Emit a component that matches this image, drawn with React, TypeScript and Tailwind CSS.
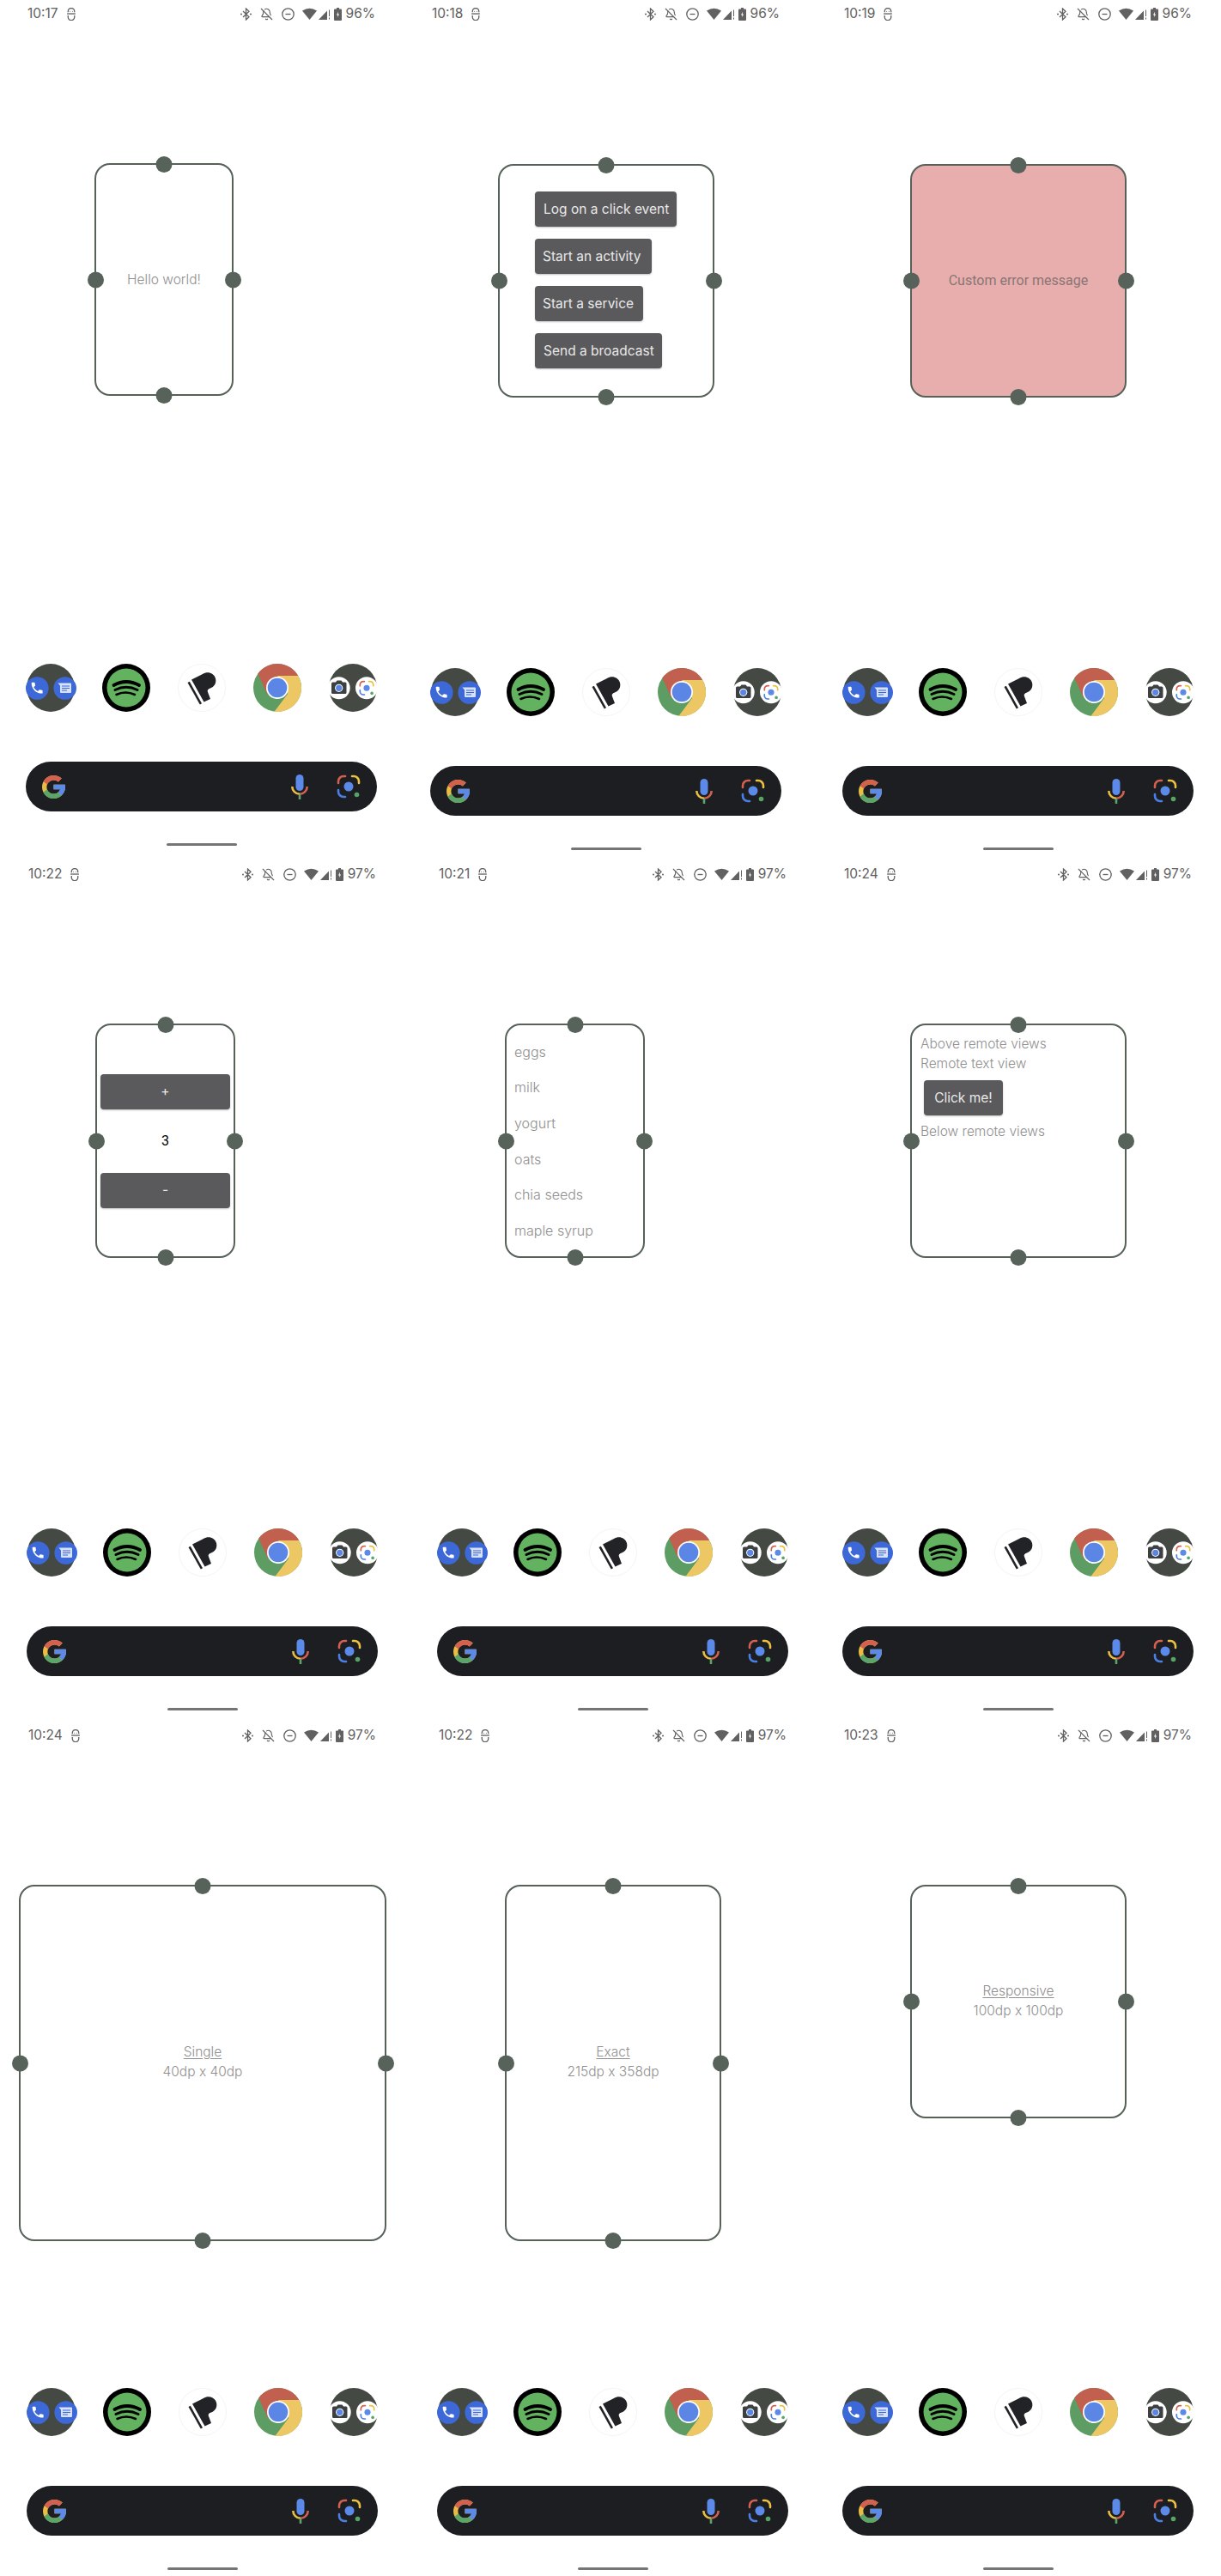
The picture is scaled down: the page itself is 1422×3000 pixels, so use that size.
import { BellOff } from 'lucide-react';
import type { ReactNode } from 'react';

function MiniIcon() {
    return (
        <svg viewBox="0 0 12 16" className="h-[15px] w-[12px]" fill="none" stroke="currentColor" strokeWidth="1.4">
            <path d="M2 5.500V4.500a4 4 0 0 1 8 0V5.500" />
            <path d="M.8 7.500h10.400" />
            <path d="M2 9.500v2a4 4 0 0 0 8 0v-2" />
            <circle cx="4.500" cy="4.500" r=".6" fill="currentColor" stroke="none" />
            <circle cx="7.500" cy="4.500" r=".6" fill="currentColor" stroke="none" />
        </svg>
    );
}

function StatusIcons() {
    return (
        <div className="flex items-center">
            <svg viewBox="0 0 13 15" className="h-[15px] w-[13px]" fill="none" stroke="currentColor" strokeWidth="1.3">
                <path d="M3 4l7 6.700-3.500 3.300V1L10 4.300 3 11" />
                <circle cx="1" cy="7.500" r="1" fill="currentColor" stroke="none" />
                <circle cx="12" cy="7.500" r="1" fill="currentColor" stroke="none" />
            </svg>
            <BellOff className="ml-[10px] h-[15px] w-[15px]" strokeWidth={1.8} />
            <svg viewBox="0 0 15 15" className="ml-[10px] h-[15px] w-[15px]" fill="none" stroke="currentColor" strokeWidth="1.3">
                <circle cx="7.500" cy="7.500" r="6.700" />
                <path d="M4.500 7.500h6" />
            </svg>
            <svg viewBox="0 0 17 14" className="ml-[9px] h-[14px] w-[17px]" fill="currentColor">
                <path d="M0 3.500Q8.500-2 17 3.500L8.500 14Z" />
            </svg>
            <svg viewBox="0 0 14 14" className="ml-[2px] h-[14px] w-[14px]" fill="currentColor">
                <path d="M0 14L10 3.500V14Z" />
                <path d="M12 2.500h1V10h-1zM12 11.500h1V13.500h-1z" />
            </svg>
            <svg viewBox="0 0 9 15" className="ml-[4px] h-[15px] w-[9px]" fill="currentColor">
                <path d="M3 0h3v1.500h2a1 1 0 0 1 1 1V14a1 1 0 0 1-1 1H1a1 1 0 0 1-1-1V2.500a1 1 0 0 1 1-1h2z" />
                <path d="M5 4.500L3 8.500h1.300V11L6 7.500H4.700z" fill="#fff" />
            </svg>
        </div>
    );
}

function StatusBar({ time, battery }: { time: string; battery: string }) {
    return (
        <div className="flex h-[32px] items-center justify-between pr-[33px] pl-[32px] text-[15.5px] font-normal text-[#616161]">
            <div className="flex items-center gap-[9px]">
                <span>{time}</span>
                <MiniIcon />
            </div>
            <div className="flex items-center gap-[5px]">
                <StatusIcons />
                <span>{battery}</span>
            </div>
        </div>
    );
}

function LensIcon({ x = 0, y = 0, size = 28 }: { x?: number; y?: number; size?: number }) {
    return (
        <svg x={x} y={y} width={size} height={size} viewBox="0 0 28 28" fill="none" strokeWidth="2.600" strokeLinecap="round">
            <path d="M2 10V8a6 6 0 0 1 6-6h2" stroke="#d4604f" />
            <path d="M18 2h2a6 6 0 0 1 6 6v2" stroke="#ecc040" />
            <path d="M2 18v2a6 6 0 0 0 6 6h2" stroke="#4a7fe5" />
            <circle cx="14" cy="14" r="5.500" fill="#5b8ae8" />
            <circle cx="23.500" cy="23.500" r="2.800" fill="#57a566" />
        </svg>
    );
}

function Dock() {
    return (
        <div className="flex gap-[32px] pl-[31px]">
            {/* phone + messages folder */}
            <svg viewBox="0 0 56 56" className="h-[56px] w-[56px] overflow-visible">
                <circle cx="28" cy="28" r="28" fill="#444943" />
                <circle cx="12.300" cy="28.500" r="13.300" fill="#3d69d8" />
                <circle cx="44.700" cy="28.500" r="13.300" fill="#3d69d8" />
                <path
                    transform="translate(3.500 19.500) scale(.72)"
                    fill="#fff"
                    d="M6.620 10.790c1.440 2.830 3.760 5.140 6.590 6.590l2.200-2.200c.27-.27.67-.36 1.020-.24 1.120.37 2.330.57 3.570.57.55 0 1 .45 1 1V20c0 .55-.45 1-1 1-9.390 0-17-7.610-17-17 0-.55.45-1 1-1h3.500c.55 0 1 .45 1 1 0 1.250.2 2.450.57 3.570.11.35.03.74-.25 1.020l-2.200 2.200z"
                />
                <path d="M36.500 22.500H51a1 1 0 0 1 1 1V33a1 1 0 0 1-1 1H40a1 1 0 0 1-1-1v-7.500z" fill="#d7e1f8" />
                <path d="M41 26h9M41 28.500h9M41 31h6" stroke="#3d69d8" strokeWidth="1.200" />
            </svg>
            {/* spotify */}
            <svg viewBox="0 0 56 56" className="h-[56px] w-[56px]" fill="none" stroke="#000" strokeLinecap="round">
                <circle cx="28" cy="28" r="28" fill="#000" stroke="none" />
                <circle cx="28" cy="28" r="22.500" fill="#62b25f" stroke="none" />
                <path d="M13.500 25Q28 17 43 25" strokeWidth="3.800" />
                <path d="M15 30.500Q28 24 41 30.500" strokeWidth="3" />
                <path d="M16.500 36Q27 31 38 36" strokeWidth="2.500" />
            </svg>
            {/* piano */}
            <svg viewBox="0 0 56 56" className="h-[56px] w-[56px]">
                <circle cx="28" cy="28" r="27.500" fill="#fff" stroke="#f4f4f4" />
                <path d="M16 18.500L29 12C34 8.500 42 10 44 17C45.500 23 42 27 38 28.500C35 29.500 34 31 35 33L38 41L30.500 44.500Z" fill="#222327" />
                <path d="M11.500 22L13.800 20.800L28 46.300L25.800 47.500Z" fill="#222327" />
            </svg>
            {/* chrome */}
            <svg viewBox="0 0 56 56" className="h-[56px] w-[56px]">
                <circle cx="28" cy="28" r="28" fill="#5d9c63" />
                <path d="M28 14L52.250 14A28 28 0 0 1 24.500 55.800L40.100 35Z" fill="#ecc764" />
                <path d="M28 14L52.250 14A28 28 0 0 0 5.300 11.600L15.900 35Z" fill="#c2604f" />
                <circle cx="28" cy="28" r="13" fill="#fff" />
                <circle cx="28" cy="28" r="11.300" fill="#5b86e5" />
            </svg>
            {/* camera + lens folder */}
            <svg viewBox="0 0 56 56" className="h-[56px] w-[56px] overflow-visible">
                <circle cx="28" cy="28" r="28" fill="#444943" />
                <circle cx="11.700" cy="28.300" r="13" fill="#fff" />
                <circle cx="44" cy="28.300" r="13" fill="#fff" />
                <path d="M4.500 21.500H8l1.500-2h5l1.500 2h3a1.500 1.500 0 0 1 1.500 1.500V33.500A1.500 1.500 0 0 1 19 35H4.500A1.500 1.500 0 0 1 3 33.500V23a1.500 1.500 0 0 1 1.500-1.500z" fill="#3c4043" />
                <circle cx="11.700" cy="28.300" r="4.600" fill="#fff" />
                <circle cx="11.700" cy="28.300" r="3.600" fill="#5b86e5" />
                <LensIcon x={35} y={19.300} size={18} />
            </svg>
        </div>
    );
}

function SearchBar() {
    return (
        <div className="mt-[58px] ml-[30px] flex h-[58px] w-[409px] items-center rounded-full bg-[#1d1e22] pr-[19px] pl-[19px]">
            <svg viewBox="4 4 40 40" className="h-[27px] w-[27px]">
                <path fill="#e9bd45" d="M43.600 20.100H42V20H24v8h11.300c-1.600 4.700-6.100 8-11.300 8-6.600 0-12-5.400-12-12s5.400-12 12-12c3.100 0 5.800 1.200 8 3l5.700-5.700C34 6.100 29.300 4 24 4 13 4 4 13 4 24s9 20 20 20 20-9 20-20c0-1.300-.1-2.700-.4-3.900z" />
                <path fill="#d4604f" d="M6.300 14.700l6.600 4.800C14.700 15.100 19 12 24 12c3.100 0 5.800 1.200 8 3l5.700-5.700C34 6.100 29.300 4 24 4 16.300 4 9.700 8.300 6.300 14.700z" />
                <path fill="#5aa66a" d="M24 44c5.200 0 9.900-2 13.400-5.200l-6.200-5.200C29.200 35.100 26.700 36 24 36c-5.200 0-9.600-3.300-11.300-7.900l-6.500 5C9.500 39.600 16.200 44 24 44z" />
                <path fill="#5b8ae8" d="M43.600 20.100H42V20H24v8h11.300c-.8 2.200-2.200 4.200-4.100 5.600l6.200 5.200C37 39.200 44 34 44 24c0-1.300-.1-2.700-.4-3.900z" />
            </svg>
            <svg viewBox="0 0 20 29" className="mr-[33px] ml-auto h-[29px] w-[20px]" fill="none" strokeWidth="2.600">
                <rect x="5.500" y="0" width="9" height="19" rx="4.500" fill="#5b8ae8" />
                <path d="M1.300 14A8.700 8.700 0 0 0 10 22.700" stroke="#e9bd45" />
                <path d="M10 22.700A8.700 8.700 0 0 0 18.700 14" stroke="#d4604f" />
                <path d="M10 23v6" stroke="#5aa66a" />
            </svg>
            <LensIcon />
        </div>
    );
}

function Widget({ className, children }: { className: string; children?: ReactNode }) {
    return (
        <div className={`relative rounded-[18px] border-2 border-[#566258] ${className}`}>
            {children}
            <span className="absolute -top-[10.5px] left-1/2 h-[19px] w-[19px] -translate-x-1/2 rounded-full bg-[#56625a]" />
            <span className="absolute -bottom-[10.5px] left-1/2 h-[19px] w-[19px] -translate-x-1/2 rounded-full bg-[#56625a]" />
            <span className="absolute top-1/2 -left-[10.5px] h-[19px] w-[19px] -translate-y-1/2 rounded-full bg-[#56625a]" />
            <span className="absolute top-1/2 -right-[10.5px] h-[19px] w-[19px] -translate-y-1/2 rounded-full bg-[#56625a]" />
        </div>
    );
}

function WidgetButton({ label, className }: { label: string; className: string }) {
    return (
        <div className={`flex h-[41px] items-center rounded-[4px] bg-[#5a5a5c] text-[15.5px] font-normal text-[#e8e8e8] shadow-[0_1px_2px_rgba(0,0,0,0.25)] ${className}`}>
            {label}
        </div>
    );
}

function Phone({
    time,
    battery,
    className,
    children,
}: {
    time: string;
    battery: string;
    className: string;
    children: ReactNode;
}) {
    return (
        <div className={`flex h-full w-[470px] shrink-0 flex-col ${className}`}>
            <StatusBar time={time} battery={battery} />
            {children}
            <div className="mt-auto">
                <Dock />
                <SearchBar />
                <div className="mt-[37px] ml-[194px] h-[3px] w-[82px] rounded-full bg-[#757575]" />
            </div>
        </div>
    );
}

function SizeLabel({ title, size }: { title: string; size: string }) {
    return (
        <div className="flex h-full flex-col items-center justify-center pb-[3px] text-[15.5px] leading-[23px] text-[#8f8f8f]">
            <span className="underline underline-offset-2">{title}</span>
            <span>{size}</span>
        </div>
    );
}

const groceries = ['eggs', 'milk', 'yogurt', 'oats', 'chia seeds', 'maple syrup'];

export default function App() {
    return (
        <div className="h-[3000px] w-[1422px] overflow-hidden bg-white font-['Inter',sans-serif] font-light">
            <div className="flex h-[1002px]">
                <Phone time="10:17" battery="96%" className="pb-[17px]">
                    <Widget className="mt-[158px] ml-[110px] h-[271px] w-[162px]">
                        <div className="flex h-full items-center justify-center text-[15.5px] text-[#8f8f8f]">Hello world!</div>
                    </Widget>
                </Phone>
                <Phone time="10:18" battery="96%" className="ml-[1px] pb-[12px]">
                    <Widget className="mt-[159px] ml-[109px] h-[272px] w-[252px]">
                        <div className="flex flex-col gap-[14px] pt-[30px] pl-[41px]">
                            <WidgetButton label="Log on a click event" className="w-[165px] pl-[10px]" />
                            <WidgetButton label="Start an activity" className="w-[136px] pl-[9px]" />
                            <WidgetButton label="Start a service" className="w-[126px] pl-[9px]" />
                            <WidgetButton label="Send a broadcast" className="w-[148px] pl-[10px]" />
                        </div>
                    </Widget>
                </Phone>
                <Phone time="10:19" battery="96%" className="ml-[10px] pb-[12px]">
                    <Widget className="mt-[159px] ml-[109px] h-[272px] w-[252px] bg-[#e7aead]">
                        <div className="flex h-full items-center justify-center font-['Roboto',sans-serif] text-[16px] font-normal text-[#8a7574]">
                            Custom error message
                        </div>
                    </Widget>
                </Phone>
            </div>

            <div className="flex h-[1003px]">
                <Phone time="10:22" battery="97%" className="ml-[1px] pb-[13px]">
                    <Widget className="mt-[158px] ml-[110px] h-[273px] w-[163px]">
                        <div className="flex h-full flex-col justify-center px-[4px]">
                            <WidgetButton label="+" className="justify-center" />
                            <div className="flex h-[74px] items-center justify-center font-['Roboto',sans-serif] text-[16px] font-normal text-black">3</div>
                            <WidgetButton label="-" className="justify-center" />
                        </div>
                    </Widget>
                </Phone>
                <Phone time="10:21" battery="97%" className="ml-[8px] pb-[13px]">
                    <Widget className="mt-[158px] ml-[109px] h-[273px] w-[163px]">
                        <div className="flex flex-col pt-[10px] pl-[9px] text-[16px] text-[#8f8f8f]">
                            {groceries.map((item) => (
                                <div key={item} className="flex h-[41.6px] items-center">
                                    {item}
                                </div>
                            ))}
                        </div>
                    </Widget>
                </Phone>
                <Phone time="10:24" battery="97%" className="ml-[2px] pb-[13px]">
                    <Widget className="mt-[158px] ml-[109px] h-[273px] w-[252px]">
                        <div className="flex flex-col pt-[10px] pl-[10px] text-[15.5px] leading-[23px] text-[#8f8f8f]">
                            <span>Above remote views</span>
                            <span>Remote text view</span>
                            <WidgetButton label="Click me!" className="mt-[8px] mb-[7px] ml-[4px] w-[92px] justify-center" />
                            <span>Below remote views</span>
                        </div>
                    </Widget>
                </Phone>
            </div>

            <div className="flex h-[995px]">
                <Phone time="10:24" battery="97%" className="ml-[1px] pb-[7px]">
                    <Widget className="mt-[158px] ml-[21px] h-[415px] w-[428px]">
                        <SizeLabel title="Single" size="40dp x 40dp" />
                    </Widget>
                </Phone>
                <Phone time="10:22" battery="97%" className="ml-[8px] pb-[7px]">
                    <Widget className="mt-[158px] ml-[109px] h-[415px] w-[252px]">
                        <SizeLabel title="Exact" size="215dp x 358dp" />
                    </Widget>
                </Phone>
                <Phone time="10:23" battery="97%" className="ml-[2px] pb-[7px]">
                    <Widget className="mt-[158px] ml-[109px] h-[272px] w-[252px]">
                        <SizeLabel title="Responsive" size="100dp x 100dp" />
                    </Widget>
                </Phone>
            </div>
        </div>
    );
}
